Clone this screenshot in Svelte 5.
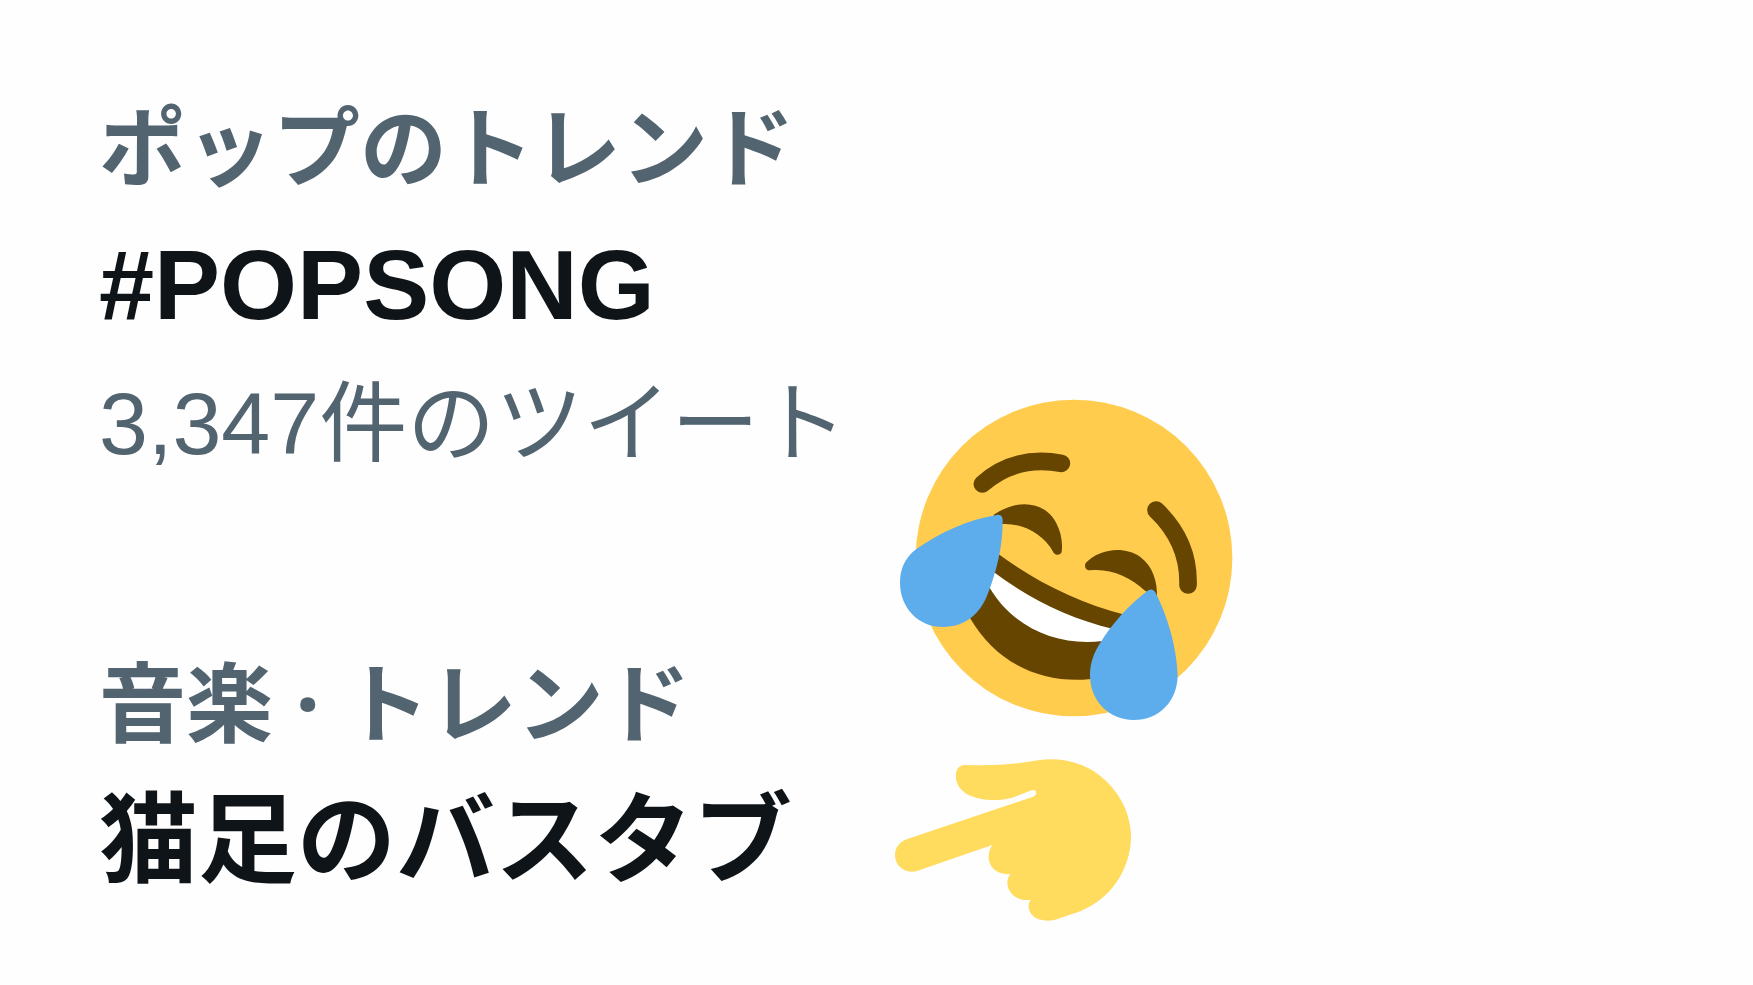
<script lang="ts">
  type Trend = {
    category: string;
    name: string;
    count?: string;
  };

  const trends: Trend[] = [
    { category: 'ポップのトレンド', name: '#POPSONG', count: '3,347件のツイート' },
    { category: '音楽 · トレンド', name: '猫足のバスタブ' }
  ];
</script>

<main class="page">
  <div class="trends">
    {#each trends as trend}
      <section class="trend">
        <p class="meta category">{trend.category}</p>
        <h2 class="name">{trend.name}</h2>
        {#if trend.count}
          <p class="meta">{trend.count}</p>
        {/if}
      </section>
    {/each}
  </div>

  <div class="stickers">
    <svg class="face" viewBox="0 0 1110 1080" role="img" aria-label="Tears of joy">
      <circle cx="582" cy="534" r="475" fill="#ffcc4d" />
      <!-- brows -->
      <g fill="none" stroke="#664500" stroke-width="53" stroke-linecap="round">
        <path d="M307 312 Q405 225 544 250" />
        <path d="M828 390 Q928 485 924 615" />
      </g>
      <!-- eyes -->
      <g fill="#664500">
        <path d="M340 405 C420 350 500 370 529 430 C542 455 549 485 545 515 C543 525 528 528 521 518 C490 460 425 428 366 432 Z" />
        <path d="M617 549 C655 508 730 495 780 530 C820 560 832 605 831 650 L795 632 C750 590 690 564 630 571 C617 571 612 559 617 549 Z" />
      </g>
      <!-- mouth -->
      <path d="M350 518 C460 600 590 668 740 706 L660 894 C500 918 355 860 270 714 Z" fill="#664500" />
      <path d="M338 574 C445 655 570 717 700 747 L668 783 C535 800 400 745 328 622 Z" fill="#fff" />
      <!-- tears -->
      <g fill="#5dadec">
        <path d="M350 405 C361 403 367 408 368 419 C369 500 349 575 324 640 C300 705 252 741 190 741 C115 741 60 683 60 608 C60 566 75 534 108 508 C180 457 262 420 350 405 Z" />
        <path d="M805 631 C813 626 821 628 826 637 C863 710 889 798 893 884 C893 963 837 1020 761 1020 C687 1020 630 963 630 886 C630 850 641 820 660 790 C697 731 744 677 805 631 Z" />
      </g>
    </svg>

    <svg class="hand" viewBox="0 0 810 600" role="img" aria-label="Pointing left">
      <path
        fill="#ffdb5e"
        d="M257 75 C332 77 400 75 475 61 C550 49 625 72 676 121 C728 170 753 232 753 292 C751 390 693 475 603 513 L526 539 C488 548 454 536 447 508 C444 495 447 485 453 479 C407 487 377 452 383 420 C385 411 388 406 392 402 C352 406 325 381 326 350 C327 336 330 325 337 315 L113 392 C80 403 45 382 45 345 C45 324 58 306 80 298 L460 170 C473 164 471 148 457 150 L397 173 C350 186 296 181 260 162 C232 144 224 119 229 96 C233 81 242 75 257 75 Z"
      />
    </svg>
  </div>
</main>

<style>
  :global(body) {
    margin: 0;
    background: #fefefe;
  }

  .page {
    display: grid;
    grid-template-columns: max-content 1fr;
    column-gap: 33px;
    padding: 90px 99px 40px;
    font-family: 'Liberation Sans', 'Noto Sans CJK JP', sans-serif;
  }

  .trends {
    display: flex;
    flex-direction: column;
    gap: 166px;
  }

  .trend {
    display: flex;
    flex-direction: column;
    gap: 27px;
  }

  .meta,
  .name {
    margin: 0;
    line-height: 112px;
    white-space: nowrap;
  }

  .meta {
    color: #536471;
    font-size: 88px;
    font-weight: 400;
  }

  .category {
    font-family: 'Noto Sans', 'Noto Sans CJK JP', sans-serif;
    font-size: 87px;
    font-weight: 700;
  }

  .name {
    color: #0f1419;
    font-size: 99px;
    font-weight: 700;
  }

  .stickers {
    display: flex;
    flex-direction: column;
    padding-top: 290px;
  }

  .face {
    display: block;
    width: 370px;
  }

  .hand {
    display: block;
    width: 270px;
  }
</style>
